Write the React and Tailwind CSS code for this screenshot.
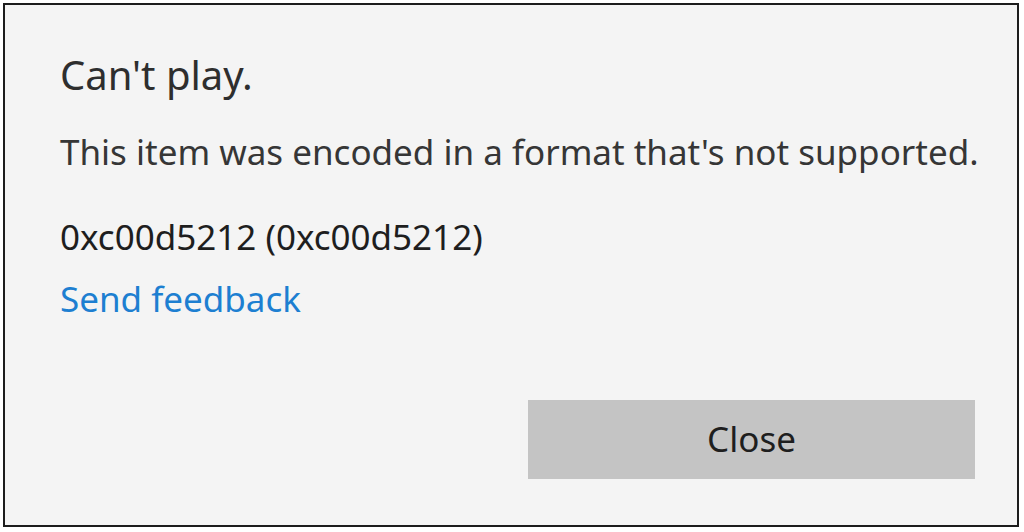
export default function App() {
  return (
    <div className="w-[1024px] h-[532px] bg-white pt-[3px] pl-[3px]" style={{ fontFamily: '"Noto Sans", "Open Sans", sans-serif' }}>
      <div className="w-[1016px] h-[524px] border-2 border-[#1c1c1c] bg-[#f4f4f4] flex flex-col">
        <div className="pl-[55px] pt-[44px] flex flex-col">
          <h1 className="text-[40px] leading-[52px] text-[#2e2e2e]">Can't play.</h1>
          <p className="mt-[27px] text-[35px] leading-[48px] text-[#363636]">
            This item was encoded in a format that's not supported.
          </p>
          <p className="mt-[37px] text-[35px] leading-[48px] text-[#1e1e1e]">0xc00d5212 (0xc00d5212)</p>
          <a className="mt-[14px] text-[35px] leading-[48px] text-[#1d7fd1] self-start">Send feedback</a>
        </div>
        <button className="mt-auto self-end mr-[42px] mb-[46px] w-[447px] h-[79px] bg-[#c4c4c4] text-[35px] text-[#1e1e1e]">
          Close
        </button>
      </div>
    </div>
  )
}
